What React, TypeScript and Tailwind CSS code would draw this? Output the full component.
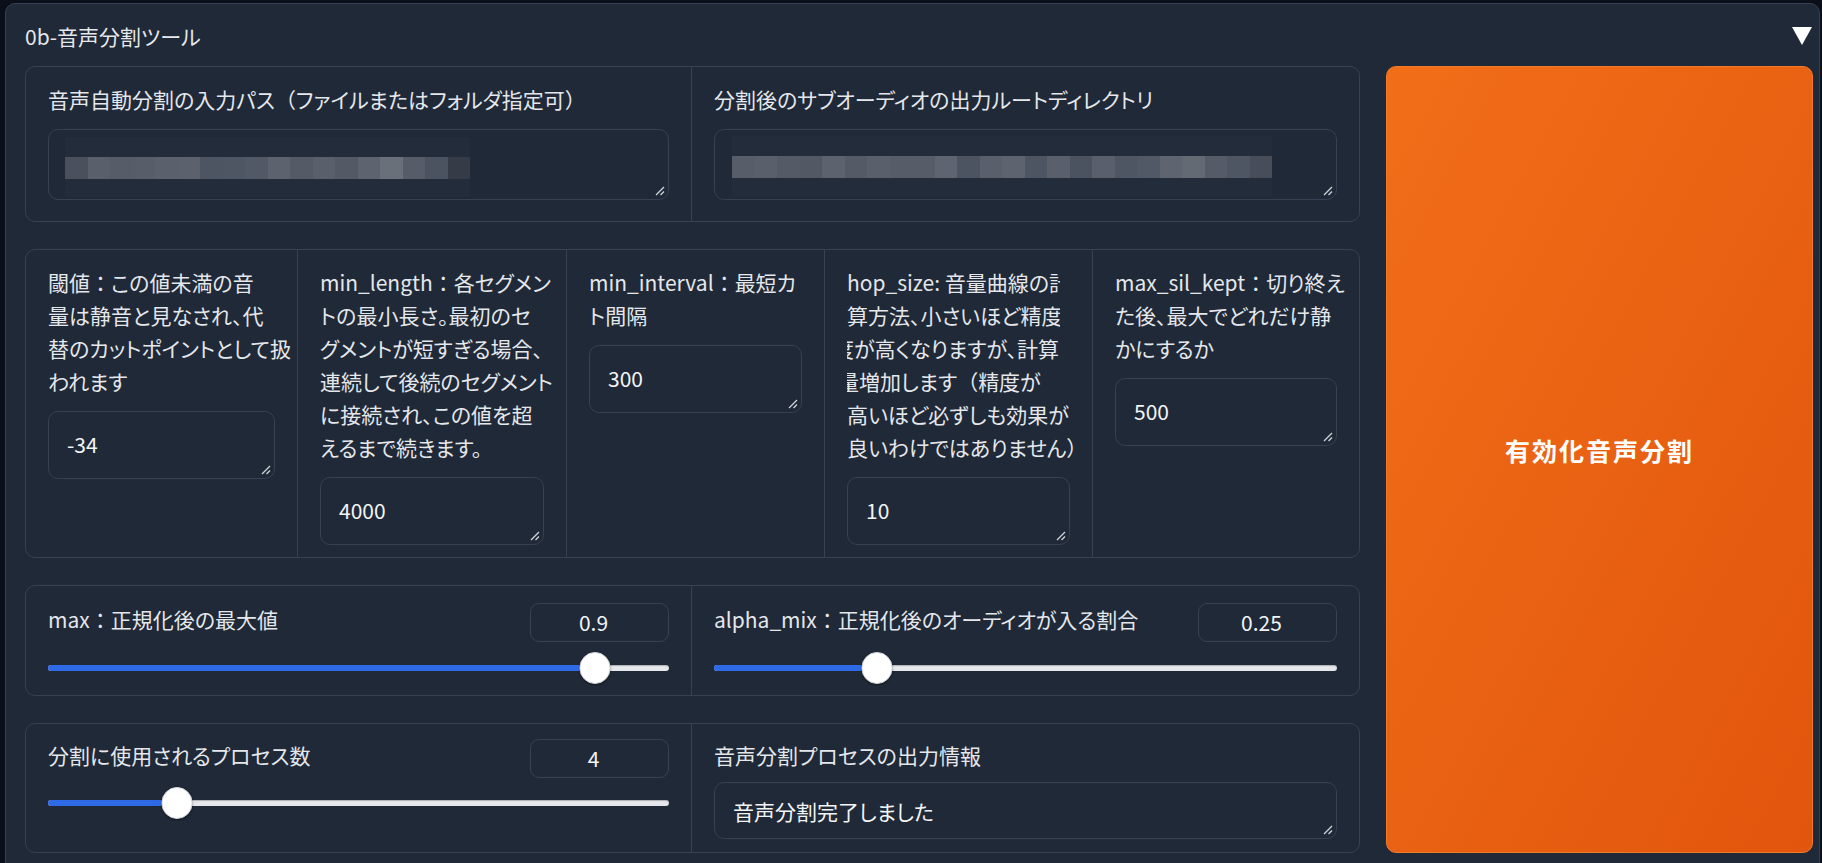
import React from "react";

function J({ s }: { s: string }) {
  const parts = s.split(/([：（）])/);
  return (
    <>
      {parts.map((p, i) =>
        /^[：（）]$/.test(p) ? (
          <span key={i} className="[font-feature-settings:normal]">
            {p}
          </span>
        ) : (
          <React.Fragment key={i}>{p}</React.Fragment>
        )
      )}
    </>
  );
}

function Grip() {
  return (
    <svg
      className="absolute bottom-[3px] right-[3px]"
      width="11"
      height="11"
      viewBox="0 0 11 11"
    >
      <path d="M10 2 L2 10 M10 6.5 L6.5 10" stroke="#cfd3d9" strokeWidth="1.3" />
    </svg>
  );
}

function Blur({ colors }: { colors: string[] }) {
  return (
    <div className="flex flex-col">
      <div className="flex h-[20px]">
        {colors.map((_, i) => (
          <div key={i} className="h-full w-[22.5px] bg-white/[0.015]" />
        ))}
      </div>
      <div className="flex h-[22px]">
        {colors.map((c, i) => (
          <div key={i} className="h-full w-[22.5px]" style={{ backgroundColor: c }} />
        ))}
      </div>
      <div className="flex h-[18px]">
        {colors.map((_, i) => (
          <div key={i} className="h-full w-[22.5px] bg-white/[0.015]" />
        ))}
      </div>
    </div>
  );
}

function TextArea({
  h,
  children,
  pl = "pl-[18px]",
}: {
  h: string;
  children: React.ReactNode;
  pl?: string;
}) {
  return (
    <div
      className={`relative flex items-center rounded-[10px] border border-[#374151] bg-[#1f2937] ${h} ${pl}`}
    >
      {children}
      <Grip />
    </div>
  );
}

function Slider({ frac }: { frac: number }) {
  return (
    <div className="relative h-[32px]">
      <div className="absolute left-0 right-0 top-[13px] h-[6px] rounded-full bg-[#e6e7ea] shadow-[inset_0_1px_1px_rgba(0,0,0,0.25)]" />
      <div
        className="absolute left-0 top-[13px] h-[6px] rounded-full bg-[#2f6ae6]"
        style={{ width: `${frac * 100}%` }}
      />
      <div
        className="absolute top-0 h-[32px] w-[31px] -translate-x-1/2 rounded-full border border-[#d4d6da] bg-white shadow-[0_1px_2px_rgba(0,0,0,0.4)]"
        style={{ left: `${frac * 100}%` }}
      />
    </div>
  );
}

function NumBox({ v }: { v: string }) {
  return (
    <div className="flex h-[39px] w-[139px] shrink-0 items-center justify-center rounded-[9px] border border-[#374151] bg-[#1f2937] pr-[12px] text-[21px] text-[#f3f4f6]">
      {v}
    </div>
  );
}

const blurA = [
  "#4a515d", "#5a606b", "#565d68", "#585e69", "#5b616c", "#5c626d",
  "#4e5562", "#4f5663", "#525966", "#5d636e", "#545b67", "#5a606b",
  "#535a66", "#5e646f", "#6a707a", "#565d68", "#4c5360", "#353c48",
];
const blurB = [
  "#575e69", "#5a606b", "#545b66", "#525965", "#5d636e", "#545b66",
  "#5a606b", "#565d68", "#565d68", "#5f6570", "#4d5461", "#5a606b",
  "#5e646f", "#4e5562", "#5a606b", "#4c5360", "#5a606b", "#4f5663",
  "#525966", "#5f6570", "#646a74", "#555c67", "#4f5663", "#474e5a",
];

function Col({
  lines,
  val,
  first = false,
}: {
  lines: React.ReactNode[];
  val: string;
  first?: boolean;
}) {
  return (
    <div
      className={`min-w-0 overflow-hidden px-[22px] pt-[16px] ${
        first ? "" : "border-l border-[#374151]"
      }`}
    >
      <div className="mr-[-20px] overflow-hidden text-[21px] leading-[33px]">
        {lines.map((l, i) => (
          <div key={i} className="whitespace-nowrap">
            {l}
          </div>
        ))}
      </div>
      <div className="mt-[13px]">
        <TextArea h="h-[68px]">
          <span className="text-[21px] text-[#f3f4f6]">{val}</span>
        </TextArea>
      </div>
    </div>
  );
}

export default function App() {
  return (
    <div className="h-[863px] w-full overflow-hidden bg-[#0b0f19] pl-[5px] pr-[2px] pt-[3px] font-['Noto_Sans_CJK_JP','Noto_Sans',sans-serif] text-[#e5e7eb] [font-feature-settings:'palt']">
      <div className="h-[880px] rounded-[10px] border border-[#374151] bg-[#1f2937] pl-[19px] pr-[6px]">
        {/* header */}
        <div className="flex h-[62px] items-center justify-between pt-[2px]">
          <span className="text-[21px] leading-[33px]">0b-音声分割ツール</span>
          <svg className="mr-[1px]" width="20" height="18" viewBox="0 0 20 18">
            <polygon points="0,0 20,0 10,18" fill="#ffffff" />
          </svg>
        </div>

        <div className="flex gap-[26px]">
          <div className="flex w-[1335px] flex-col gap-[27px]">
            {/* row 1 */}
            <div className="grid h-[156px] grid-cols-[665px_1fr] rounded-[10px] border border-[#374151]">
              <div className="px-[22px] pt-[16px]">
                <div className="text-[21px] leading-[33px] whitespace-nowrap">
                  <J s="音声自動分割の入力パス（ファイルまたはフォルダ指定可）" />
                </div>
                <div className="mt-[13px]">
                  <TextArea h="h-[71px]" pl="pl-[16px]">
                    <div className="pt-[5px]">
                      <Blur colors={blurA} />
                    </div>
                  </TextArea>
                </div>
              </div>
              <div className="border-l border-[#374151] px-[22px] pt-[16px]">
                <div className="text-[21px] leading-[33px] whitespace-nowrap">
                  分割後のサブオーディオの出力ルートディレクトリ
                </div>
                <div className="mt-[13px]">
                  <TextArea h="h-[71px]" pl="pl-[17px]">
                    <div className="pt-[3px]">
                      <Blur colors={blurB} />
                    </div>
                  </TextArea>
                </div>
              </div>
            </div>

            {/* row 2 */}
            <div className="grid h-[309px] grid-cols-[271px_269px_258px_268px_1fr] rounded-[10px] border border-[#374151]">
              <Col
                first
                val="-34"
                lines={[
                  <J s="閾値：この値未満の音" />,
                  "量は静音と見なされ、代",
                  "替のカットポイントとして扱",
                  "われます",
                ]}
              />
              <Col
                val="4000"
                lines={[
                  <J s="min_length：各セグメン" />,
                  "トの最小長さ。最初のセ",
                  "グメントが短すぎる場合、",
                  "連続して後続のセグメント",
                  "に接続され、この値を超",
                  "えるまで続きます。",
                ]}
              />
              <Col
                val="300"
                lines={[<J s="min_interval：最短カ" />, "ト間隔"]}
              />
              <Col
                val="10"
                lines={[
                  <div className="w-[213px] overflow-hidden">hop_size: 音量曲線の計</div>,
                  <div className="w-[213px] overflow-hidden">算方法、小さいほど精度</div>,
                  <>
                    <span className="inline-block w-[7px] overflow-hidden align-top">
                      <span className="ml-[-14px]">度</span>
                    </span>
                    が高くなりますが、計算
                  </>,
                  <>
                    <span className="inline-block w-[12px] overflow-hidden align-top">
                      <span className="ml-[-9px]">量</span>
                    </span>
                    増加します<J s="（" />精度が
                  </>,
                  "高いほど必ずしも効果が",
                  <J s="良いわけではありません）" />,
                ]}
              />
              <Col
                val="500"
                lines={[
                  <J s="max_sil_kept：切り終え" />,
                  "た後、最大でどれだけ静",
                  "かにするか",
                ]}
              />
            </div>

            {/* row 3 */}
            <div className="grid h-[111px] grid-cols-[665px_1fr] rounded-[10px] border border-[#374151]">
              <div className="px-[22px] pt-[17px]">
                <div className="flex items-start justify-between">
                  <span className="text-[21px] leading-[33px] whitespace-nowrap">
                    <J s="max：正規化後の最大値" />
                  </span>
                  <NumBox v="0.9" />
                </div>
                <div className="mt-[10px]">
                  <Slider frac={0.881} />
                </div>
              </div>
              <div className="border-l border-[#374151] px-[22px] pt-[17px]">
                <div className="flex items-start justify-between">
                  <span className="text-[21px] leading-[33px] whitespace-nowrap">
                    <J s="alpha_mix：正規化後のオーディオが入る割合" />
                  </span>
                  <NumBox v="0.25" />
                </div>
                <div className="mt-[10px]">
                  <Slider frac={0.261} />
                </div>
              </div>
            </div>

            {/* row 4 */}
            <div className="grid h-[130px] grid-cols-[665px_1fr] rounded-[10px] border border-[#374151]">
              <div className="px-[22px] pt-[15px]">
                <div className="flex items-start justify-between">
                  <span className="text-[21px] leading-[33px] whitespace-nowrap">
                    分割に使用されるプロセス数
                  </span>
                  <NumBox v="4" />
                </div>
                <div className="mt-[9px]">
                  <Slider frac={0.207} />
                </div>
              </div>
              <div className="border-l border-[#374151] px-[22px] pt-[15px]">
                <div className="text-[21px] leading-[33px] whitespace-nowrap">
                  音声分割プロセスの出力情報
                </div>
                <div className="mt-[10px]">
                  <TextArea h="h-[57px]">
                    <span className="pt-[2px] text-[21px] text-[#f3f4f6]">
                      音声分割完了しました
                    </span>
                  </TextArea>
                </div>
              </div>
            </div>
          </div>

          {/* orange button */}
          <div className="flex w-[427px] items-center justify-center rounded-[10px] border border-[#f07a2a] bg-linear-to-br from-[#f26e18] to-[#e1550c] pb-[18px]">
            <span className="text-[25px] font-bold tracking-[2px] text-white">
              有効化音声分割
            </span>
          </div>
        </div>
      </div>
    </div>
  );
}
